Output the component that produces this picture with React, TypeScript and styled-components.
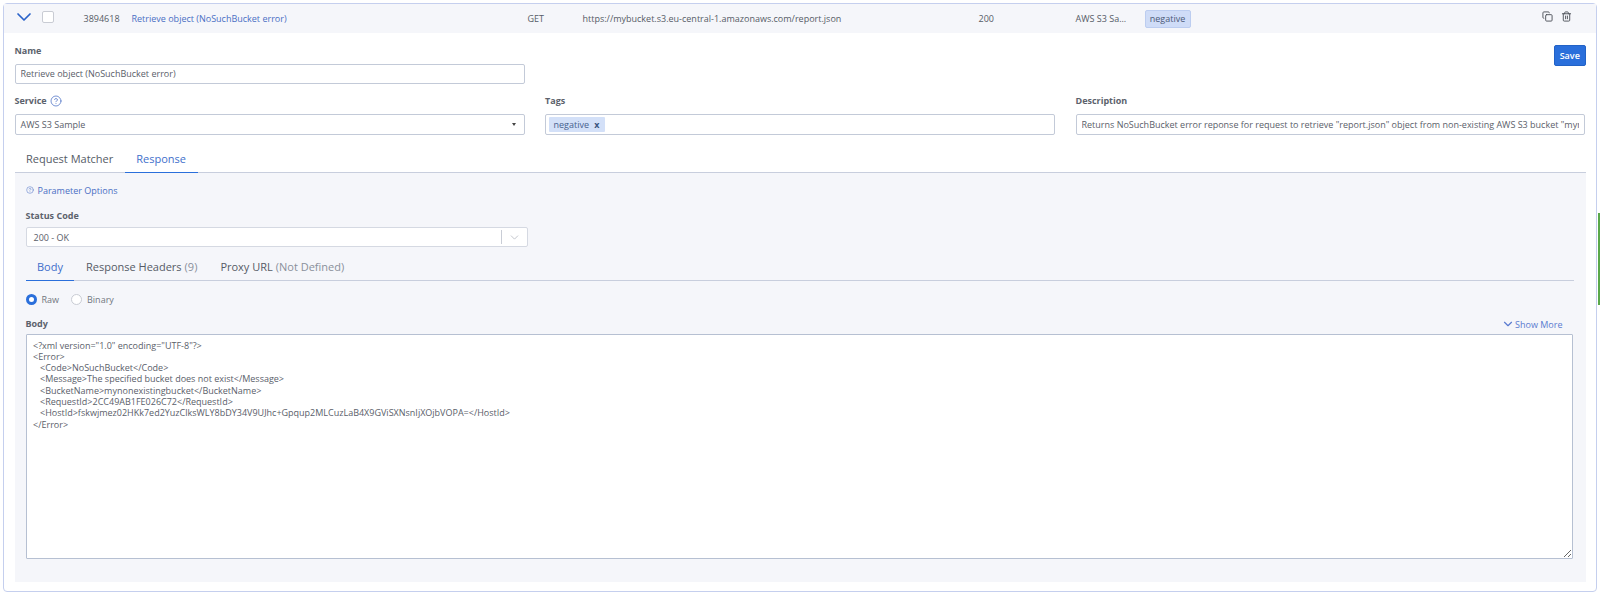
import React from "react";
import styled, { createGlobalStyle } from "styled-components";
import { ChevronDown, Copy, Trash2, HelpCircle } from "lucide-react";

const GlobalStyle = createGlobalStyle`
  html, body {
    margin: 0;
    padding: 0;
    background: #fff;
    overflow: hidden;
  }
  body {
    font-family: "Open Sans", "Liberation Sans", sans-serif;
    font-size: 9px;
    color: #555b66;
  }
  * { box-sizing: border-box; }
`;

const Page = styled.div`
  width: 1600px;
  height: 595px;
  padding: 3px 3px 2px 3px;
  position: relative;
`;

const ScrollThumb = styled.div`
  position: absolute;
  right: 0;
  top: 213px;
  width: 2px;
  height: 92px;
  background: #5aa84a;
`;

const Card = styled.div`
  width: 1594px;
  height: 589px;
  border: 1.5px solid #c5cfee;
  border-radius: 4px;
  display: flex;
  flex-direction: column;
`;

const HeaderRow = styled.div`
  height: 29px;
  flex: none;
  background: #f5f6fa;
  display: flex;
  align-items: center;
  padding-left: 8px;
`;

const HeaderCell = styled.span<{ $w: number; $link?: boolean }>`
  flex: none;
  width: ${(p) => p.$w}px;
  color: ${(p) => (p.$link ? "#4a6fc4" : "#565c66")};
  white-space: nowrap;
`;

const Toggle = styled.div`
  width: 30px;
  margin-top: -3px;
  color: #2a62c9;
  display: flex;
`;

const CheckBox = styled.span`
  width: 12px;
  height: 12px;
  margin-right: 29.5px;
  background: #fff;
  border: 1px solid #c9ccd4;
  border-radius: 2px;
  margin-top: -3px;
`;

const Badge = styled.span`
  width: 46px;
  height: 18px;
  background: #cfdcf7;
  border: 1px solid #bccdf0;
  border-radius: 2px;
  color: #4b5a78;
  display: flex;
  align-items: center;
  justify-content: center;
`;

const RowActions = styled.div`
  margin-left: auto;
  margin-right: 24px;
  margin-top: -5px;
  display: flex;
  gap: 8px;
  color: #4a4f57;
`;

const Body = styled.div`
  flex: 1;
  display: flex;
  flex-direction: column;
  padding: 0 10.5px 9.5px 10.5px;
  min-height: 0;
`;

const NameRow = styled.div`
  display: flex;
  justify-content: space-between;
  height: 62px;
  padding-top: 11.5px;
`;

const Field = styled.div<{ $w?: number }>`
  width: ${(p) => (p.$w ? `${p.$w}px` : "auto")};
  flex: none;
`;

const Label = styled.div`
  font-weight: 700;
  color: #5c626c;
  line-height: 12px;
  display: flex;
  align-items: center;
  gap: 3px;
`;

const TextInput = styled.input<{ $h?: number }>`
  display: block;
  width: 100%;
  height: ${(p) => p.$h ?? 21}px;
  margin-top: 7px;
  padding: 0 5px;
  font: inherit;
  color: #5a606a;
  background: #fff;
  border: 1px solid #c3cad8;
  border-radius: 2px;
  outline: none;
`;

const SaveButton = styled.button`
  width: 31.5px;
  height: 21px;
  padding: 0;
  background: #2a6fdb;
  color: #fff;
  font: inherit;
  font-weight: 600;
  border: 1px solid #2262c6;
  border-radius: 2px;
`;

const FieldRow = styled.div`
  display: grid;
  grid-template-columns: 510px 510px 509px;
  column-gap: 20.5px;
`;

const NativeSelect = styled.div`
  height: 21px;
  margin-top: 7px;
  padding: 0 5px;
  background: #fff;
  border: 1px solid #c3cad8;
  border-radius: 2px;
  display: flex;
  align-items: center;
  justify-content: space-between;
  color: #5a606a;
`;

const Caret = styled.span`
  width: 0;
  height: 0;
  margin-right: 2.5px;
  border-left: 2.5px solid transparent;
  border-right: 2.5px solid transparent;
  border-top: 3.5px solid #444;
`;

const TagBox = styled(NativeSelect)`
  justify-content: flex-start;
  padding: 0 2.5px;
`;

const TagChip = styled.span`
  height: 15px;
  width: 56px;
  padding: 0 5px;
  background: #d3e0f8;
  border-radius: 1px;
  color: #46608f;
  display: flex;
  align-items: center;
  justify-content: space-between;
`;

const TagRemove = styled.span`
  font-weight: 700;
  color: #3b5680;
`;

const TabBar = styled.div<{ $h: number }>`
  height: ${(p) => p.$h}px;
  flex: none;
  display: flex;
  border-bottom: 1px solid #c8cedd;
`;

const Tab = styled.div<{ $active?: boolean }>`
  padding: 0 11.5px 6px;
  font-size: 11px;
  line-height: 15px;
  color: ${(p) => (p.$active ? "#3f6fcb" : "#555b66")};
  display: flex;
  align-items: flex-end;
  white-space: nowrap;
  margin-bottom: -1px;
  border-bottom: 1.5px solid ${(p) => (p.$active ? "#2a6fdb" : "transparent")};
`;

const Muted = styled.span`
  color: #8a909b;
  margin-left: 3px;
`;

const Panel = styled.div`
  flex: 1;
  background: #f5f6fa;
  display: flex;
  flex-direction: column;
  padding: 0 12px 0 11px;
  min-height: 0;
`;

const LinkRow = styled.div`
  display: flex;
  align-items: center;
  gap: 4px;
  height: 12px;
  margin-top: 11px;
  color: #4a6fc4;
`;

const PanelLabel = styled(Label)`
  margin-top: 13.5px;
`;

const ComboBox = styled.div`
  width: 502px;
  height: 20px;
  margin-top: 5.5px;
  padding: 0 0 0 7px;
  background: #fff;
  border: 1px solid #d5d9e2;
  border-radius: 2px;
  display: flex;
  align-items: center;
  color: #5a606a;
`;

const ComboArrow = styled.div`
  margin-left: auto;
  width: 26px;
  height: 14px;
  border-left: 1px solid #c9cdd6;
  color: #b5b9c2;
  display: flex;
  align-items: center;
  justify-content: center;
`;

const RadioRow = styled.div`
  display: flex;
  align-items: center;
  height: 12px;
  margin-top: 12.5px;
`;

const Radio = styled.span<{ $on?: boolean }>`
  width: 11px;
  height: 11px;
  border-radius: 50%;
  background: #fff;
  border: ${(p) => (p.$on ? "3px solid #2a6fdb" : "1px solid #c9ccd4")};
  margin-right: 5px;
`;

const RadioText = styled.span`
  color: #71767f;
  margin-right: 12px;
`;

const BodyHead = styled.div`
  display: flex;
  justify-content: space-between;
  align-items: center;
  margin-top: 13px;
  height: 12px;
`;

const ShowMore = styled.div`
  display: flex;
  align-items: center;
  margin-right: 11px;
  color: #5a7bd0;
`;

const BodyArea = styled.textarea`
  display: block;
  width: 1547px;
  height: 224.5px;
  margin-top: 4px;
  padding: 4.5px 6.5px;
  font: inherit;
  line-height: 11.3px;
  color: #5a606a;
  background: #fff;
  border: 1px solid #b6c0d2;
  border-radius: 1px;
  outline: none;
  resize: both;
`;

const xml = `<?xml version="1.0" encoding="UTF-8"?>
<Error>
   <Code>NoSuchBucket</Code>
   <Message>The specified bucket does not exist</Message>
   <BucketName>mynonexistingbucket</BucketName>
   <RequestId>2CC49AB1FE026C72</RequestId>
   <HostId>fskwjmez02HKk7ed2YuzClksWLY8bDY34V9UJhc+Gpqup2MLCuzLaB4X9GViSXNsnIjXOjbVOPA=</HostId>
</Error>`;

const description =
  'Returns NoSuchBucket error reponse for request to retrieve "report.json" object from non-existing AWS S3 bucket "mynonexistingbucket"';

export default function App() {
  return (
    <Page>
      <GlobalStyle />
      <Card>
        <HeaderRow>
          <Toggle>
            <ChevronDown size={24} strokeWidth={1.7} />
          </Toggle>
          <CheckBox />
          <HeaderCell $w={48}>3894618</HeaderCell>
          <HeaderCell $w={396} $link>
            Retrieve object (NoSuchBucket error)
          </HeaderCell>
          <HeaderCell $w={55}>GET</HeaderCell>
          <HeaderCell $w={396}>https://mybucket.s3.eu-central-1.amazonaws.com/report.json</HeaderCell>
          <HeaderCell $w={97}>200</HeaderCell>
          <HeaderCell $w={69}>AWS S3 Sa...</HeaderCell>
          <Badge>negative</Badge>
          <RowActions>
            <Copy size={11} />
            <Trash2 size={11} />
          </RowActions>
        </HeaderRow>
        <Body>
          <NameRow>
            <Field $w={510}>
              <Label>Name</Label>
              <TextInput $h={20} readOnly value="Retrieve object (NoSuchBucket error)" />
            </Field>
            <SaveButton>Save</SaveButton>
          </NameRow>
          <FieldRow>
            <Field>
              <Label>
                Service <HelpCircle size={12} color="#4a6fc4" strokeWidth={1.5} />
              </Label>
              <NativeSelect>
                AWS S3 Sample
                <Caret />
              </NativeSelect>
            </Field>
            <Field>
              <Label>Tags</Label>
              <TagBox>
                <TagChip>
                  negative <TagRemove>x</TagRemove>
                </TagChip>
              </TagBox>
            </Field>
            <Field>
              <Label>Description</Label>
              <TextInput readOnly value={description} />
            </Field>
          </FieldRow>
          <TabBar $h={38}>
            <Tab>Request Matcher</Tab>
            <Tab $active>Response</Tab>
          </TabBar>
          <Panel>
            <LinkRow>
              <HelpCircle size={8} strokeWidth={1.5} />
              Parameter Options
            </LinkRow>
            <PanelLabel>Status Code</PanelLabel>
            <ComboBox>
              200 - OK
              <ComboArrow>
                <ChevronDown size={13} strokeWidth={1.5} />
              </ComboArrow>
            </ComboBox>
            <TabBar $h={33.5}>
              <Tab $active>Body</Tab>
              <Tab>
                Response Headers<Muted>(9)</Muted>
              </Tab>
              <Tab>
                Proxy URL<Muted>(Not Defined)</Muted>
              </Tab>
            </TabBar>
            <RadioRow>
              <Radio $on />
              <RadioText>Raw</RadioText>
              <Radio />
              <RadioText>Binary</RadioText>
            </RadioRow>
            <BodyHead>
              <Label>Body</Label>
              <ShowMore>
                <ChevronDown size={14} strokeWidth={2} />
                Show More
              </ShowMore>
            </BodyHead>
            <BodyArea readOnly value={xml} />
          </Panel>
        </Body>
      </Card>
      <ScrollThumb />
    </Page>
  );
}
